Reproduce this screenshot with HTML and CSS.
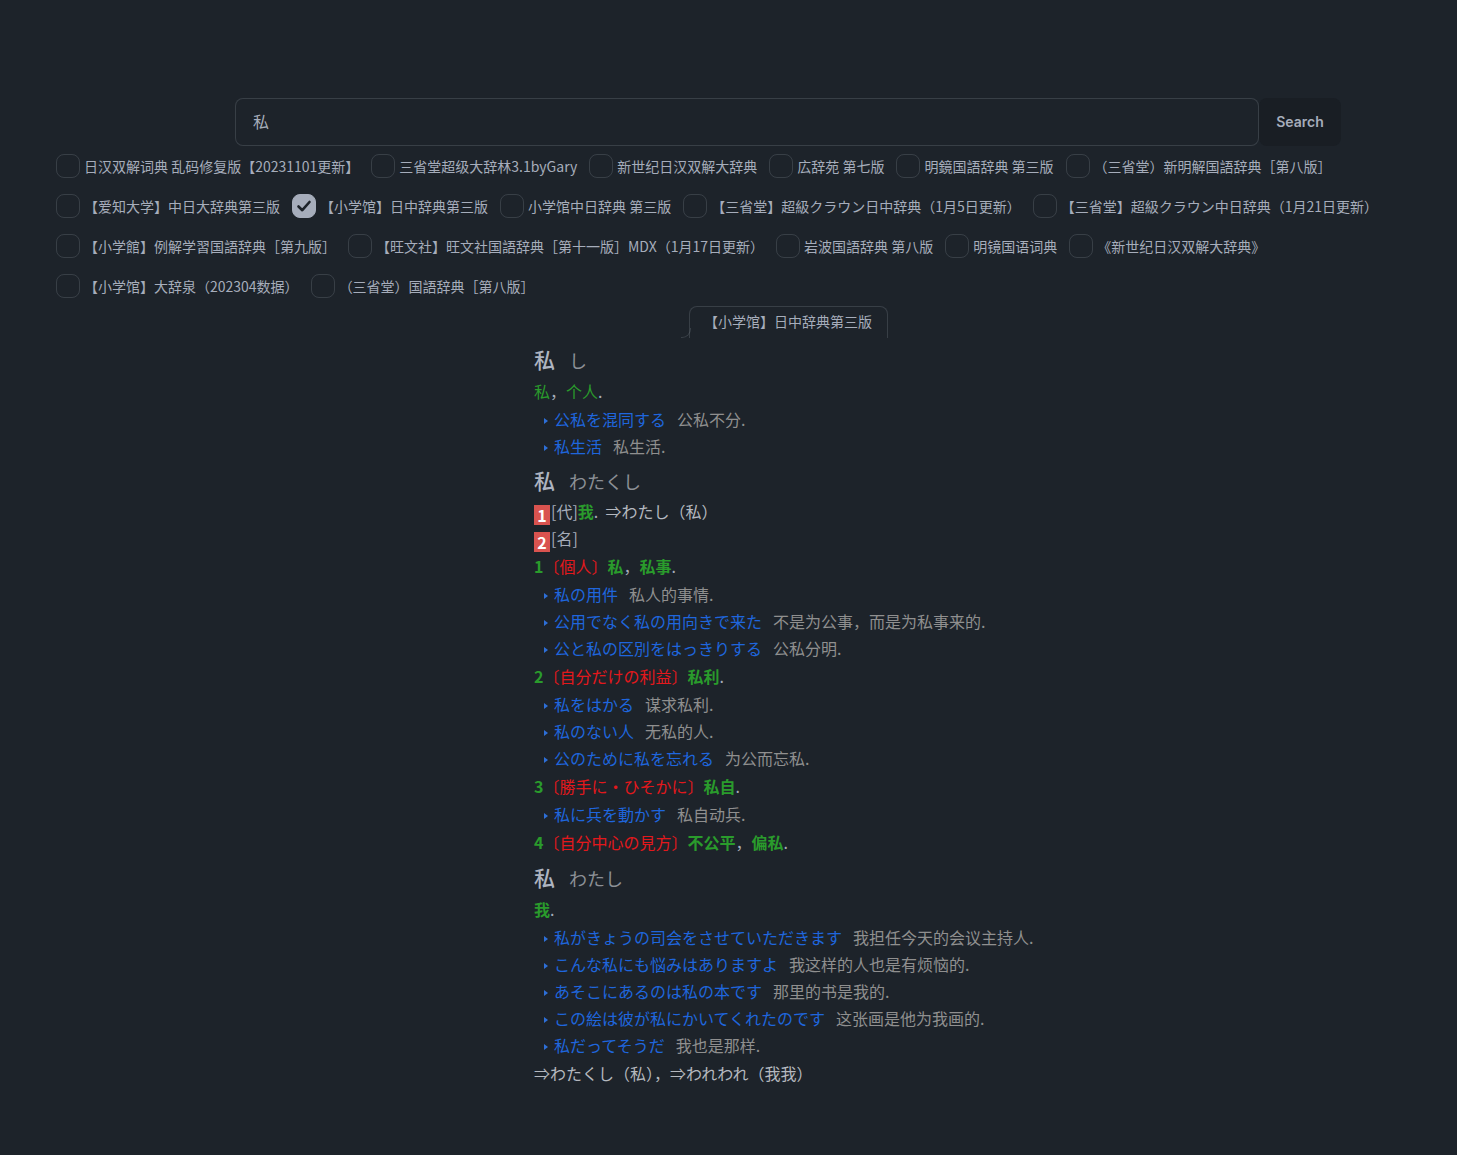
FILE: index.html
```html
<!DOCTYPE html>
<html lang="zh">
<head>
<meta charset="utf-8">
<title>私</title>
<link rel="stylesheet" href="styles.css">
</head>
<body>
<div class="main">
  <form class="search">
    <input class="search-input" type="text" value="私">
    <button class="search-btn" type="button">Search</button>
  </form>
</div>
<div class="dicts">
  <label class="dict"><span class="box"></span><span class="dict-name">日汉双解词典 乱码修复版【20231101更新】</span></label>
  <label class="dict"><span class="box"></span><span class="dict-name">三省堂超级大辞林3.1byGary</span></label>
  <label class="dict"><span class="box"></span><span class="dict-name">新世纪日汉双解大辞典</span></label>
  <label class="dict"><span class="box"></span><span class="dict-name">広辞苑 第七版</span></label>
  <label class="dict"><span class="box"></span><span class="dict-name">明鏡国語辞典 第三版</span></label>
  <label class="dict"><span class="box"></span><span class="dict-name">（三省堂）新明解国語辞典［第八版］</span></label>
  <label class="dict"><span class="box"></span><span class="dict-name">【爱知大学】中日大辞典第三版</span></label>
  <label class="dict"><span class="box checked"><svg viewBox="0 0 24 24" width="24" height="24"><path d="M6.5 12.5 L10.3 16.2 L17.5 8" fill="none" stroke="#1d232a" stroke-width="2.6" stroke-linecap="round" stroke-linejoin="round"/></svg></span><span class="dict-name">【小学馆】日中辞典第三版</span></label>
  <label class="dict"><span class="box"></span><span class="dict-name">小学馆中日辞典 第三版</span></label>
  <label class="dict"><span class="box"></span><span class="dict-name">【三省堂】超級クラウン日中辞典（1月5日更新）</span></label>
  <label class="dict"><span class="box"></span><span class="dict-name">【三省堂】超級クラウン中日辞典（1月21日更新）</span></label>
  <label class="dict"><span class="box"></span><span class="dict-name">【小学館】例解学習国語辞典［第九版］</span></label>
  <label class="dict"><span class="box"></span><span class="dict-name">【旺文社】旺文社国語辞典［第十一版］MDX（1月17日更新）</span></label>
  <label class="dict"><span class="box"></span><span class="dict-name">岩波国語辞典 第八版</span></label>
  <label class="dict"><span class="box"></span><span class="dict-name">明镜国语词典</span></label>
  <label class="dict"><span class="box"></span><span class="dict-name">《新世纪日汉双解大辞典》</span></label>
  <label class="dict"><span class="box"></span><span class="dict-name">【小学馆】大辞泉（202304数据）</span></label>
  <label class="dict"><span class="box"></span><span class="dict-name">（三省堂）国語辞典［第八版］</span></label>
</div>
<div class="main">
  <div class="tabs"><div class="tab">【小学馆】日中辞典第三版</div></div>
  <div class="entry">
    <div class="hw first"><span class="kanji">私</span><span class="kana">し</span></div>
    <div class="def"><span class="g">私</span>，<span class="g">个人</span>.</div>
    <div class="ex"><span class="jp">公私を混同する</span><span class="zh">公私不分.</span></div>
    <div class="ex"><span class="jp">私生活</span><span class="zh">私生活.</span></div>

    <div class="hw"><span class="kanji">私</span><span class="kana">わたくし</span></div>
    <div class="pos"><span class="num">1</span>[代]<span class="g b">我</span>.&nbsp; <span class="ref">⇒わたし（私）</span></div>
    <div class="pos"><span class="num">2</span>[名]</div>
    <div class="def"><span class="g b">1</span><span class="r">〔個人〕</span><span class="g b">私</span>，<span class="g b">私事</span>.</div>
    <div class="ex"><span class="jp">私の用件</span><span class="zh">私人的事情.</span></div>
    <div class="ex"><span class="jp">公用でなく私の用向きで来た</span><span class="zh">不是为公事，而是为私事来的.</span></div>
    <div class="ex"><span class="jp">公と私の区別をはっきりする</span><span class="zh">公私分明.</span></div>
    <div class="def"><span class="g b">2</span><span class="r">〔自分だけの利益〕</span><span class="g b">私利</span>.</div>
    <div class="ex"><span class="jp">私をはかる</span><span class="zh">谋求私利.</span></div>
    <div class="ex"><span class="jp">私のない人</span><span class="zh">无私的人.</span></div>
    <div class="ex"><span class="jp">公のために私を忘れる</span><span class="zh">为公而忘私.</span></div>
    <div class="def"><span class="g b">3</span><span class="r">〔勝手に・ひそかに〕</span><span class="g b">私自</span>.</div>
    <div class="ex"><span class="jp">私に兵を動かす</span><span class="zh">私自动兵.</span></div>
    <div class="def"><span class="g b">4</span><span class="r">〔自分中心の見方〕</span><span class="g b">不公平</span>，<span class="g b">偏私</span>.</div>

    <div class="hw"><span class="kanji">私</span><span class="kana">わたし</span></div>
    <div class="def"><span class="g b">我</span>.</div>
    <div class="ex"><span class="jp">私がきょうの司会をさせていただきます</span><span class="zh">我担任今天的会议主持人.</span></div>
    <div class="ex"><span class="jp">こんな私にも悩みはありますよ</span><span class="zh">我这样的人也是有烦恼的.</span></div>
    <div class="ex"><span class="jp">あそこにあるのは私の本です</span><span class="zh">那里的书是我的.</span></div>
    <div class="ex"><span class="jp">この絵は彼が私にかいてくれたのです</span><span class="zh">这张画是他为我画的.</span></div>
    <div class="ex"><span class="jp">私だってそうだ</span><span class="zh">我也是那样.</span></div>
    <div class="def ref">⇒わたくし（私），⇒われわれ（我我）</div>
  </div>
</div>
</body>
</html>
```
FILE: styles.css
```css
* { box-sizing: border-box; }
html, body { background: #1d232a; }
body {
  margin: 0;
  color: #a6adbb;
  font-family: "Noto Sans CJK SC", "Noto Sans", sans-serif;
  min-height: 1155px;
}
.main { padding-left: 119px; }
.search {
  display: flex;
  width: 1106px;
  margin: 98px auto 0;
  height: 48px;
}
.search-input {
  flex: 1;
  height: 48px;
  background: #1d232a;
  border: 1px solid rgba(166, 173, 187, 0.2);
  border-radius: 8px;
  color: #a6adbb;
  font-family: "Noto Sans CJK SC", sans-serif;
  font-size: 16px;
  padding: 0 16px 2px 17px;
  outline: none;
}
.search-btn {
  width: 82px;
  height: 48px;
  border: none;
  border-radius: 8px;
  background: #191e24;
  color: #a6adbb;
  font-family: "Inter", "Liberation Sans", sans-serif;
  font-weight: 600;
  font-size: 14px;
  padding-bottom: 2px;
}
.dicts {
  display: flex;
  flex-wrap: wrap;
  padding: 0 50px;
}
.dict {
  display: flex;
  align-items: center;
  height: 40px;
  padding: 0 6px;
  font-size: 14px;
  line-height: 20px;
}
.box {
  width: 24px;
  height: 24px;
  border: 1px solid rgba(166, 173, 187, 0.2);
  border-radius: 8px;
  flex: none;
}
.box.checked {
  background: #a6adbb;
  border-color: #a6adbb;
  display: flex;
  align-items: center;
  justify-content: center;
}
.box.checked svg { display: block; margin: -1px; }
.dict-name { margin-left: 4px; white-space: nowrap; padding-bottom: 1px; }
.tabs {
  display: flex;
  justify-content: center;
}
.tab {
  position: relative;
  height: 32px;
  width: 199px;
  border: 1px solid rgba(166, 173, 187, 0.2);
  border-bottom: none;
  border-radius: 8px 8px 0 0;
  font-size: 14px;
  line-height: 29px;
  text-align: center;
}
.tab::before {
  content: "";
  position: absolute;
  left: -9px;
  bottom: 0;
  width: 9px;
  height: 9px;
  border-right: 1px solid rgba(166, 173, 187, 0.2);
  border-bottom: 1px solid rgba(166, 173, 187, 0.2);
  border-bottom-right-radius: 9px;
}
.entry {
  width: 508px;
  margin: 0 auto;
  font-size: 16px;
  white-space: nowrap;
  padding-bottom: 40px;
}
.hw {
  margin-top: 2px;
  line-height: 36px;
  height: 36px;
}
.hw.first { margin-top: 3px; }
.kanji { font-size: 21px; color: #aeb4c0; font-weight: 500; }
.kana { font-size: 18px; color: #8c9096; margin-left: 14px; }
.def { line-height: 29px; }
.pos { line-height: 27px; }
.num {
  display: inline-block;
  background: #d9534f;
  color: #fff;
  font-weight: 600;
  font-size: 16px;
  width: 16px;
  height: 20px;
  line-height: 20px;
  text-align: center;
  margin-right: 1px;
  vertical-align: -4px;
}
.ex {
  line-height: 27px;
  padding-left: 20px;
  position: relative;
}
.ex::before {
  content: "";
  position: absolute;
  left: 10px;
  top: 12px;
  border-left: 4px solid #2d6fd8;
  border-top: 3px solid transparent;
  border-bottom: 3px solid transparent;
}
.jp { color: #1f66dd; }
.zh { color: #8f8f8f; margin-left: 11px; }
.g { color: #2a9b2c; }
.b { font-weight: 700; }
.r { color: #e3181c; }
.ref { color: #b4b8bf; }
```
